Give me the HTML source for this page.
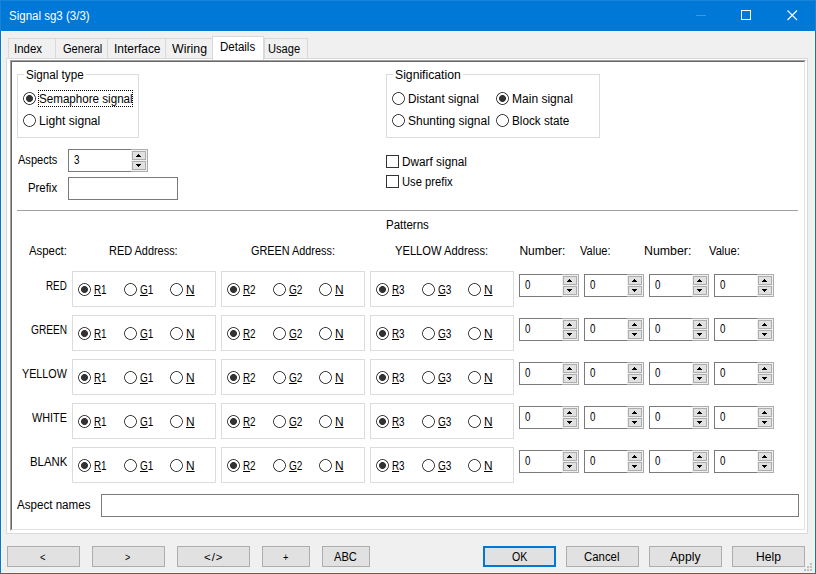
<!DOCTYPE html><html><head><meta charset="utf-8"><title>Signal sg3</title><style>

html,body{margin:0;padding:0;}
body{width:816px;height:574px;position:relative;overflow:hidden;background:#f0f0f0;font-family:"Liberation Sans",sans-serif;font-size:12px;color:#000;}
.a{position:absolute;box-sizing:border-box;}
.t{position:absolute;white-space:nowrap;line-height:16px;height:16px;transform-origin:0 50%;}
.gb{position:absolute;box-sizing:border-box;border:1px solid #dcdcdc;}
.rb{position:absolute;box-sizing:border-box;width:13px;height:13px;border-radius:50%;background:radial-gradient(circle at 50% 50%,#fff 0,#fff 5.15px,#333 5.75px,#333 6.3px,rgba(51,51,51,0) 6.8px);}
.rb.on{background:radial-gradient(circle at 50% 50%,#333 0,#333 3.1px,#fff 3.8px,#fff 5.15px,#333 5.75px,#333 6.3px,rgba(51,51,51,0) 6.8px);}
.cb{position:absolute;box-sizing:border-box;width:13px;height:13px;border:1px solid #333;background:#fff;}
.in{position:absolute;box-sizing:border-box;border:1px solid #7a7a7a;background:#fff;}
.btn{position:absolute;box-sizing:border-box;border:1px solid #adadad;background:#e1e1e1;}
.sp{position:absolute;box-sizing:border-box;border:1px solid #7a7a7a;background:#fff;height:23px;}
.sp .sb{position:absolute;right:-1px;top:-1px;bottom:-1px;width:17px;box-sizing:border-box;border:1px solid #adadad;border-left:none;background:#f0f0f0;}
.sp .u,.sp .d{position:absolute;left:1px;width:14px;height:9px;box-sizing:border-box;border:1px solid #adadad;background:#e1e1e1;}
.sp .u{top:1px;} .sp .d{top:11px;}
.sp svg{position:absolute;left:-1px;top:-1px;}
.tab{position:absolute;box-sizing:border-box;border:1px solid #d9d9d9;border-bottom:none;background:#f0f0f0;top:38px;height:20px;}
u{text-decoration:underline;text-underline-offset:1px;}

</style></head><body>
<div class="a" style="left:0;top:0;width:816px;height:574px;border:1px solid #0078d7;"></div>
<div class="a" style="left:0;top:0;width:816px;height:31px;background:#0078d7;border:1px solid #1883d9;border-bottom:none;"></div>
<div class="a" style="left:1px;top:31px;width:814px;height:542px;border:1px solid #fcf5ec;"></div>
<svg class="a" style="left:690px;top:0" width="126" height="31" viewBox="0 0 126 31"><path d="M6 15.5H16" stroke="#3c97e1" stroke-width="1" fill="none"/><rect x="51.5" y="10.5" width="9" height="9" stroke="#fff" stroke-width="1" fill="none"/><path d="M97.5 10.5L107 20M107 10.5L97.5 20" stroke="#fff" stroke-width="1.1" fill="none"/></svg>
<div class="a" style="left:6px;top:58px;width:802px;height:476px;border:1px solid #d9d9d9;background:#fff;"></div>
<div class="tab" style="left:8px;width:48px;"></div>
<div class="tab" style="left:55px;width:53px;"></div>
<div class="tab" style="left:107px;width:59px;"></div>
<div class="tab" style="left:165px;width:48px;"></div>
<div class="tab" style="left:264px;width:44px;"></div>
<div class="tab" style="left:212px;width:52px;top:36px;height:24px;background:#fff;"></div>
<div class="a" style="left:10px;top:60px;width:796px;height:471px;border-style:solid;border-width:1px;border-color:#a0a0a0 #fff #fff #a0a0a0;background:#fff;"></div>
<div class="a" style="left:11px;top:61px;width:794px;height:469px;border-style:solid;border-width:1px;border-color:#696969 #e3e3e3 #e3e3e3 #696969;background:#fff;"></div>
<div class="gb" style="left:17px;top:74px;width:122px;height:64px;"></div>
<div class="a" style="left:24px;top:70px;width:62px;height:10px;background:#fff;"></div>
<div class="gb" style="left:386px;top:74px;width:214px;height:64px;"></div>
<div class="a" style="left:393px;top:70px;width:70px;height:10px;background:#fff;"></div>
<div class="rb on" style="left:23px;top:92px;"></div>
<div class="rb" style="left:23px;top:114px;"></div>
<div class="rb" style="left:392px;top:92px;"></div>
<div class="rb on" style="left:496px;top:92px;"></div>
<div class="rb" style="left:392px;top:114px;"></div>
<div class="rb" style="left:496px;top:114px;"></div>
<div class="a" style="left:38px;top:90px;width:95px;height:17px;border:1px dotted #000;"></div>
<div class="sp" style="left:68px;top:149px;width:80px;"><div class="sb"><div class="u"><svg width="14" height="9" shape-rendering="crispEdges"><rect x="6" y="3" width="1" height="1"/><rect x="5" y="4" width="3" height="1"/><rect x="4" y="5" width="5" height="1"/></svg></div><div class="d"><svg width="14" height="9" shape-rendering="crispEdges"><rect x="4" y="3" width="5" height="1"/><rect x="5" y="4" width="3" height="1"/><rect x="6" y="5" width="1" height="1"/></svg></div></div></div>
<div class="in" style="left:68px;top:177px;width:110px;height:23px;"></div>
<div class="cb" style="left:386px;top:155px;"></div>
<div class="cb" style="left:386px;top:175px;"></div>
<div class="a" style="left:17px;top:210px;width:781px;height:1px;background:#a0a0a0;"></div>
<div class="gb" style="left:72px;top:271px;width:144px;height:36px;"></div>
<div class="rb on" style="left:78px;top:283px;"></div>
<div class="rb" style="left:124px;top:283px;"></div>
<div class="rb" style="left:170px;top:283px;"></div>
<div class="gb" style="left:221px;top:271px;width:144px;height:36px;"></div>
<div class="rb on" style="left:227px;top:283px;"></div>
<div class="rb" style="left:273px;top:283px;"></div>
<div class="rb" style="left:319px;top:283px;"></div>
<div class="gb" style="left:370px;top:271px;width:144px;height:36px;"></div>
<div class="rb on" style="left:376px;top:283px;"></div>
<div class="rb" style="left:422px;top:283px;"></div>
<div class="rb" style="left:468px;top:283px;"></div>
<div class="sp" style="left:519px;top:274px;width:60px;"><div class="sb"><div class="u"><svg width="14" height="9" shape-rendering="crispEdges"><rect x="6" y="3" width="1" height="1"/><rect x="5" y="4" width="3" height="1"/><rect x="4" y="5" width="5" height="1"/></svg></div><div class="d"><svg width="14" height="9" shape-rendering="crispEdges"><rect x="4" y="3" width="5" height="1"/><rect x="5" y="4" width="3" height="1"/><rect x="6" y="5" width="1" height="1"/></svg></div></div></div>
<div class="sp" style="left:584px;top:274px;width:60px;"><div class="sb"><div class="u"><svg width="14" height="9" shape-rendering="crispEdges"><rect x="6" y="3" width="1" height="1"/><rect x="5" y="4" width="3" height="1"/><rect x="4" y="5" width="5" height="1"/></svg></div><div class="d"><svg width="14" height="9" shape-rendering="crispEdges"><rect x="4" y="3" width="5" height="1"/><rect x="5" y="4" width="3" height="1"/><rect x="6" y="5" width="1" height="1"/></svg></div></div></div>
<div class="sp" style="left:649px;top:274px;width:60px;"><div class="sb"><div class="u"><svg width="14" height="9" shape-rendering="crispEdges"><rect x="6" y="3" width="1" height="1"/><rect x="5" y="4" width="3" height="1"/><rect x="4" y="5" width="5" height="1"/></svg></div><div class="d"><svg width="14" height="9" shape-rendering="crispEdges"><rect x="4" y="3" width="5" height="1"/><rect x="5" y="4" width="3" height="1"/><rect x="6" y="5" width="1" height="1"/></svg></div></div></div>
<div class="sp" style="left:714px;top:274px;width:60px;"><div class="sb"><div class="u"><svg width="14" height="9" shape-rendering="crispEdges"><rect x="6" y="3" width="1" height="1"/><rect x="5" y="4" width="3" height="1"/><rect x="4" y="5" width="5" height="1"/></svg></div><div class="d"><svg width="14" height="9" shape-rendering="crispEdges"><rect x="4" y="3" width="5" height="1"/><rect x="5" y="4" width="3" height="1"/><rect x="6" y="5" width="1" height="1"/></svg></div></div></div>
<div class="gb" style="left:72px;top:315px;width:144px;height:36px;"></div>
<div class="rb on" style="left:78px;top:327px;"></div>
<div class="rb" style="left:124px;top:327px;"></div>
<div class="rb" style="left:170px;top:327px;"></div>
<div class="gb" style="left:221px;top:315px;width:144px;height:36px;"></div>
<div class="rb on" style="left:227px;top:327px;"></div>
<div class="rb" style="left:273px;top:327px;"></div>
<div class="rb" style="left:319px;top:327px;"></div>
<div class="gb" style="left:370px;top:315px;width:144px;height:36px;"></div>
<div class="rb on" style="left:376px;top:327px;"></div>
<div class="rb" style="left:422px;top:327px;"></div>
<div class="rb" style="left:468px;top:327px;"></div>
<div class="sp" style="left:519px;top:318px;width:60px;"><div class="sb"><div class="u"><svg width="14" height="9" shape-rendering="crispEdges"><rect x="6" y="3" width="1" height="1"/><rect x="5" y="4" width="3" height="1"/><rect x="4" y="5" width="5" height="1"/></svg></div><div class="d"><svg width="14" height="9" shape-rendering="crispEdges"><rect x="4" y="3" width="5" height="1"/><rect x="5" y="4" width="3" height="1"/><rect x="6" y="5" width="1" height="1"/></svg></div></div></div>
<div class="sp" style="left:584px;top:318px;width:60px;"><div class="sb"><div class="u"><svg width="14" height="9" shape-rendering="crispEdges"><rect x="6" y="3" width="1" height="1"/><rect x="5" y="4" width="3" height="1"/><rect x="4" y="5" width="5" height="1"/></svg></div><div class="d"><svg width="14" height="9" shape-rendering="crispEdges"><rect x="4" y="3" width="5" height="1"/><rect x="5" y="4" width="3" height="1"/><rect x="6" y="5" width="1" height="1"/></svg></div></div></div>
<div class="sp" style="left:649px;top:318px;width:60px;"><div class="sb"><div class="u"><svg width="14" height="9" shape-rendering="crispEdges"><rect x="6" y="3" width="1" height="1"/><rect x="5" y="4" width="3" height="1"/><rect x="4" y="5" width="5" height="1"/></svg></div><div class="d"><svg width="14" height="9" shape-rendering="crispEdges"><rect x="4" y="3" width="5" height="1"/><rect x="5" y="4" width="3" height="1"/><rect x="6" y="5" width="1" height="1"/></svg></div></div></div>
<div class="sp" style="left:714px;top:318px;width:60px;"><div class="sb"><div class="u"><svg width="14" height="9" shape-rendering="crispEdges"><rect x="6" y="3" width="1" height="1"/><rect x="5" y="4" width="3" height="1"/><rect x="4" y="5" width="5" height="1"/></svg></div><div class="d"><svg width="14" height="9" shape-rendering="crispEdges"><rect x="4" y="3" width="5" height="1"/><rect x="5" y="4" width="3" height="1"/><rect x="6" y="5" width="1" height="1"/></svg></div></div></div>
<div class="gb" style="left:72px;top:359px;width:144px;height:36px;"></div>
<div class="rb on" style="left:78px;top:371px;"></div>
<div class="rb" style="left:124px;top:371px;"></div>
<div class="rb" style="left:170px;top:371px;"></div>
<div class="gb" style="left:221px;top:359px;width:144px;height:36px;"></div>
<div class="rb on" style="left:227px;top:371px;"></div>
<div class="rb" style="left:273px;top:371px;"></div>
<div class="rb" style="left:319px;top:371px;"></div>
<div class="gb" style="left:370px;top:359px;width:144px;height:36px;"></div>
<div class="rb on" style="left:376px;top:371px;"></div>
<div class="rb" style="left:422px;top:371px;"></div>
<div class="rb" style="left:468px;top:371px;"></div>
<div class="sp" style="left:519px;top:362px;width:60px;"><div class="sb"><div class="u"><svg width="14" height="9" shape-rendering="crispEdges"><rect x="6" y="3" width="1" height="1"/><rect x="5" y="4" width="3" height="1"/><rect x="4" y="5" width="5" height="1"/></svg></div><div class="d"><svg width="14" height="9" shape-rendering="crispEdges"><rect x="4" y="3" width="5" height="1"/><rect x="5" y="4" width="3" height="1"/><rect x="6" y="5" width="1" height="1"/></svg></div></div></div>
<div class="sp" style="left:584px;top:362px;width:60px;"><div class="sb"><div class="u"><svg width="14" height="9" shape-rendering="crispEdges"><rect x="6" y="3" width="1" height="1"/><rect x="5" y="4" width="3" height="1"/><rect x="4" y="5" width="5" height="1"/></svg></div><div class="d"><svg width="14" height="9" shape-rendering="crispEdges"><rect x="4" y="3" width="5" height="1"/><rect x="5" y="4" width="3" height="1"/><rect x="6" y="5" width="1" height="1"/></svg></div></div></div>
<div class="sp" style="left:649px;top:362px;width:60px;"><div class="sb"><div class="u"><svg width="14" height="9" shape-rendering="crispEdges"><rect x="6" y="3" width="1" height="1"/><rect x="5" y="4" width="3" height="1"/><rect x="4" y="5" width="5" height="1"/></svg></div><div class="d"><svg width="14" height="9" shape-rendering="crispEdges"><rect x="4" y="3" width="5" height="1"/><rect x="5" y="4" width="3" height="1"/><rect x="6" y="5" width="1" height="1"/></svg></div></div></div>
<div class="sp" style="left:714px;top:362px;width:60px;"><div class="sb"><div class="u"><svg width="14" height="9" shape-rendering="crispEdges"><rect x="6" y="3" width="1" height="1"/><rect x="5" y="4" width="3" height="1"/><rect x="4" y="5" width="5" height="1"/></svg></div><div class="d"><svg width="14" height="9" shape-rendering="crispEdges"><rect x="4" y="3" width="5" height="1"/><rect x="5" y="4" width="3" height="1"/><rect x="6" y="5" width="1" height="1"/></svg></div></div></div>
<div class="gb" style="left:72px;top:403px;width:144px;height:36px;"></div>
<div class="rb on" style="left:78px;top:415px;"></div>
<div class="rb" style="left:124px;top:415px;"></div>
<div class="rb" style="left:170px;top:415px;"></div>
<div class="gb" style="left:221px;top:403px;width:144px;height:36px;"></div>
<div class="rb on" style="left:227px;top:415px;"></div>
<div class="rb" style="left:273px;top:415px;"></div>
<div class="rb" style="left:319px;top:415px;"></div>
<div class="gb" style="left:370px;top:403px;width:144px;height:36px;"></div>
<div class="rb on" style="left:376px;top:415px;"></div>
<div class="rb" style="left:422px;top:415px;"></div>
<div class="rb" style="left:468px;top:415px;"></div>
<div class="sp" style="left:519px;top:406px;width:60px;"><div class="sb"><div class="u"><svg width="14" height="9" shape-rendering="crispEdges"><rect x="6" y="3" width="1" height="1"/><rect x="5" y="4" width="3" height="1"/><rect x="4" y="5" width="5" height="1"/></svg></div><div class="d"><svg width="14" height="9" shape-rendering="crispEdges"><rect x="4" y="3" width="5" height="1"/><rect x="5" y="4" width="3" height="1"/><rect x="6" y="5" width="1" height="1"/></svg></div></div></div>
<div class="sp" style="left:584px;top:406px;width:60px;"><div class="sb"><div class="u"><svg width="14" height="9" shape-rendering="crispEdges"><rect x="6" y="3" width="1" height="1"/><rect x="5" y="4" width="3" height="1"/><rect x="4" y="5" width="5" height="1"/></svg></div><div class="d"><svg width="14" height="9" shape-rendering="crispEdges"><rect x="4" y="3" width="5" height="1"/><rect x="5" y="4" width="3" height="1"/><rect x="6" y="5" width="1" height="1"/></svg></div></div></div>
<div class="sp" style="left:649px;top:406px;width:60px;"><div class="sb"><div class="u"><svg width="14" height="9" shape-rendering="crispEdges"><rect x="6" y="3" width="1" height="1"/><rect x="5" y="4" width="3" height="1"/><rect x="4" y="5" width="5" height="1"/></svg></div><div class="d"><svg width="14" height="9" shape-rendering="crispEdges"><rect x="4" y="3" width="5" height="1"/><rect x="5" y="4" width="3" height="1"/><rect x="6" y="5" width="1" height="1"/></svg></div></div></div>
<div class="sp" style="left:714px;top:406px;width:60px;"><div class="sb"><div class="u"><svg width="14" height="9" shape-rendering="crispEdges"><rect x="6" y="3" width="1" height="1"/><rect x="5" y="4" width="3" height="1"/><rect x="4" y="5" width="5" height="1"/></svg></div><div class="d"><svg width="14" height="9" shape-rendering="crispEdges"><rect x="4" y="3" width="5" height="1"/><rect x="5" y="4" width="3" height="1"/><rect x="6" y="5" width="1" height="1"/></svg></div></div></div>
<div class="gb" style="left:72px;top:447px;width:144px;height:36px;"></div>
<div class="rb on" style="left:78px;top:459px;"></div>
<div class="rb" style="left:124px;top:459px;"></div>
<div class="rb" style="left:170px;top:459px;"></div>
<div class="gb" style="left:221px;top:447px;width:144px;height:36px;"></div>
<div class="rb on" style="left:227px;top:459px;"></div>
<div class="rb" style="left:273px;top:459px;"></div>
<div class="rb" style="left:319px;top:459px;"></div>
<div class="gb" style="left:370px;top:447px;width:144px;height:36px;"></div>
<div class="rb on" style="left:376px;top:459px;"></div>
<div class="rb" style="left:422px;top:459px;"></div>
<div class="rb" style="left:468px;top:459px;"></div>
<div class="sp" style="left:519px;top:450px;width:60px;"><div class="sb"><div class="u"><svg width="14" height="9" shape-rendering="crispEdges"><rect x="6" y="3" width="1" height="1"/><rect x="5" y="4" width="3" height="1"/><rect x="4" y="5" width="5" height="1"/></svg></div><div class="d"><svg width="14" height="9" shape-rendering="crispEdges"><rect x="4" y="3" width="5" height="1"/><rect x="5" y="4" width="3" height="1"/><rect x="6" y="5" width="1" height="1"/></svg></div></div></div>
<div class="sp" style="left:584px;top:450px;width:60px;"><div class="sb"><div class="u"><svg width="14" height="9" shape-rendering="crispEdges"><rect x="6" y="3" width="1" height="1"/><rect x="5" y="4" width="3" height="1"/><rect x="4" y="5" width="5" height="1"/></svg></div><div class="d"><svg width="14" height="9" shape-rendering="crispEdges"><rect x="4" y="3" width="5" height="1"/><rect x="5" y="4" width="3" height="1"/><rect x="6" y="5" width="1" height="1"/></svg></div></div></div>
<div class="sp" style="left:649px;top:450px;width:60px;"><div class="sb"><div class="u"><svg width="14" height="9" shape-rendering="crispEdges"><rect x="6" y="3" width="1" height="1"/><rect x="5" y="4" width="3" height="1"/><rect x="4" y="5" width="5" height="1"/></svg></div><div class="d"><svg width="14" height="9" shape-rendering="crispEdges"><rect x="4" y="3" width="5" height="1"/><rect x="5" y="4" width="3" height="1"/><rect x="6" y="5" width="1" height="1"/></svg></div></div></div>
<div class="sp" style="left:714px;top:450px;width:60px;"><div class="sb"><div class="u"><svg width="14" height="9" shape-rendering="crispEdges"><rect x="6" y="3" width="1" height="1"/><rect x="5" y="4" width="3" height="1"/><rect x="4" y="5" width="5" height="1"/></svg></div><div class="d"><svg width="14" height="9" shape-rendering="crispEdges"><rect x="4" y="3" width="5" height="1"/><rect x="5" y="4" width="3" height="1"/><rect x="6" y="5" width="1" height="1"/></svg></div></div></div>
<div class="in" style="left:101px;top:494px;width:698px;height:23px;"></div>
<div class="btn" style="left:7px;top:546px;width:73px;height:21px;"></div>
<div class="btn" style="left:92px;top:546px;width:73px;height:21px;"></div>
<div class="btn" style="left:177px;top:546px;width:73px;height:21px;"></div>
<div class="btn" style="left:262px;top:546px;width:48px;height:21px;"></div>
<div class="btn" style="left:322px;top:546px;width:48px;height:21px;"></div>
<div class="btn" style="left:566px;top:546px;width:73px;height:21px;"></div>
<div class="btn" style="left:649px;top:546px;width:73px;height:21px;"></div>
<div class="btn" style="left:732px;top:546px;width:73px;height:21px;"></div>
<div class="btn" style="left:483px;top:546px;width:73px;height:21px;border:2px solid #0078d7;"></div>
<svg class="a" style="left:803px;top:562px" width="10" height="10"><g fill="#bfbfbf"><rect x="7" y="1" width="2" height="2"/><rect x="4" y="4" width="2" height="2"/><rect x="7" y="4" width="2" height="2"/><rect x="1" y="7" width="2" height="2"/><rect x="4" y="7" width="2" height="2"/><rect x="7" y="7" width="2" height="2"/></g></svg>
<span class="t" id="t0" style="left:9.1px;top:8px;color:#fff;font-size:12px;transform:scaleX(0.9594);">Signal sg3 (3/3)</span>
<span class="t" id="t1" style="left:13.9px;top:41px;color:#000;font-size:12px;transform:scaleX(0.9526);">Index</span>
<span class="t" id="t2" style="left:63.2px;top:41px;color:#000;font-size:12px;transform:scaleX(0.9210);">General</span>
<span class="t" id="t3" style="left:113.8px;top:41px;color:#000;font-size:12px;transform:scaleX(0.9962);">Interface</span>
<span class="t" id="t4" style="left:171.7px;top:41px;color:#000;font-size:12px;transform:scaleX(1.0297);">Wiring</span>
<span class="t" id="t5" style="left:219.8px;top:39px;color:#000;font-size:12px;transform:scaleX(0.9578);">Details</span>
<span class="t" id="t6" style="left:268.1px;top:41px;color:#000;font-size:12px;transform:scaleX(0.9280);">Usage</span>
<span class="t" id="t7" style="left:26.0px;top:67px;color:#000;font-size:12px;transform:scaleX(0.9704);">Signal type</span>
<span class="t" id="t8" style="left:39.0px;top:91px;color:#000;font-size:12px;transform:scaleX(0.9683);">Semaphore signal</span>
<span class="t" id="t9" style="left:38.7px;top:113px;color:#000;font-size:12px;transform:scaleX(1.0098);">Light signal</span>
<span class="t" id="t10" style="left:394.9px;top:67px;color:#000;font-size:12px;transform:scaleX(1.0164);">Signification</span>
<span class="t" id="t11" style="left:407.9px;top:91px;color:#000;font-size:12px;transform:scaleX(0.9825);">Distant signal</span>
<span class="t" id="t12" style="left:512.2px;top:91px;color:#000;font-size:12px;transform:scaleX(1.0022);">Main signal</span>
<span class="t" id="t13" style="left:408.3px;top:113px;color:#000;font-size:12px;transform:scaleX(0.9971);">Shunting signal</span>
<span class="t" id="t14" style="left:512.2px;top:113px;color:#000;font-size:12px;transform:scaleX(0.9755);">Block state</span>
<span class="t" id="t15" style="left:18.1px;top:152px;color:#000;font-size:12px;transform:scaleX(0.9201);">Aspects</span>
<span class="t" id="t16" style="left:28.1px;top:180px;color:#000;font-size:12px;transform:scaleX(0.9474);">Prefix</span>
<span class="t" id="t17" style="left:401.6px;top:154px;color:#000;font-size:12px;transform:scaleX(0.9838);">Dwarf signal</span>
<span class="t" id="t18" style="left:401.7px;top:174px;color:#000;font-size:12px;transform:scaleX(0.9358);">Use prefix</span>
<span class="t" id="t19" style="left:385.8px;top:217px;color:#000;font-size:12px;transform:scaleX(0.9586);">Patterns</span>
<span class="t" id="t20" style="left:28.9px;top:243px;color:#000;font-size:12px;transform:scaleX(0.9482);">Aspect:</span>
<span class="t" id="t21" style="left:109.4px;top:243px;color:#000;font-size:12px;transform:scaleX(0.9109);">RED Address:</span>
<span class="t" id="t22" style="left:251.3px;top:243px;color:#000;font-size:12px;transform:scaleX(0.9050);">GREEN Address:</span>
<span class="t" id="t23" style="left:395.4px;top:243px;color:#000;font-size:12px;transform:scaleX(0.9311);">YELLOW Address:</span>
<span class="t" id="t24" style="left:519.4px;top:243px;color:#000;font-size:12px;transform:scaleX(1.0000);">Number:</span>
<span class="t" id="t25" style="left:579.8px;top:243px;color:#000;font-size:12px;transform:scaleX(0.9213);">Value:</span>
<span class="t" id="t26" style="left:643.8px;top:243px;color:#000;font-size:12px;transform:scaleX(1.0287);">Number:</span>
<span class="t" id="t27" style="left:709.3px;top:243px;color:#000;font-size:12px;transform:scaleX(0.9328);">Value:</span>
<span class="t" id="t28" style="left:74.3px;top:152px;color:#000;font-size:12px;transform:scaleX(0.8256);">3</span>
<span class="t" id="t29" style="left:17.2px;top:497px;color:#000;font-size:12px;transform:scaleX(0.9662);">Aspect names</span>
<span class="t" id="t30" style="left:45.9px;top:278px;color:#000;font-size:12px;transform:scaleX(0.8179);">RED</span>
<span class="t" id="t31" style="left:94.1px;top:282px;color:#000;font-size:12px;transform:scaleX(0.8186);"><u>R</u>1</span>
<span class="t" id="t32" style="left:140.4px;top:282px;color:#000;font-size:12px;transform:scaleX(0.8338);"><u>G</u>1</span>
<span class="t" id="t33" style="left:186.0px;top:282px;color:#000;font-size:12px;transform:scaleX(0.9892);"><u>N</u></span>
<span class="t" id="t34" style="left:243.1px;top:282px;color:#000;font-size:12px;transform:scaleX(0.8214);"><u>R</u>2</span>
<span class="t" id="t35" style="left:289.4px;top:282px;color:#000;font-size:12px;transform:scaleX(0.8354);"><u>G</u>2</span>
<span class="t" id="t36" style="left:335.0px;top:282px;color:#000;font-size:12px;transform:scaleX(0.9892);"><u>N</u></span>
<span class="t" id="t37" style="left:392.1px;top:282px;color:#000;font-size:12px;transform:scaleX(0.8207);"><u>R</u>3</span>
<span class="t" id="t38" style="left:438.0px;top:282px;color:#000;font-size:12px;transform:scaleX(0.8348);"><u>G</u>3</span>
<span class="t" id="t39" style="left:484.0px;top:282px;color:#000;font-size:12px;transform:scaleX(0.9892);"><u>N</u></span>
<span class="t" id="t40" style="left:525.4px;top:277px;color:#000;font-size:12px;transform:scaleX(0.8122);">0</span>
<span class="t" id="t41" style="left:590.4px;top:277px;color:#000;font-size:12px;transform:scaleX(0.8122);">0</span>
<span class="t" id="t42" style="left:655.4px;top:277px;color:#000;font-size:12px;transform:scaleX(0.8122);">0</span>
<span class="t" id="t43" style="left:720.4px;top:277px;color:#000;font-size:12px;transform:scaleX(0.8122);">0</span>
<span class="t" id="t44" style="left:31.3px;top:322px;color:#000;font-size:12px;transform:scaleX(0.8437);">GREEN</span>
<span class="t" id="t45" style="left:94.1px;top:326px;color:#000;font-size:12px;transform:scaleX(0.8186);"><u>R</u>1</span>
<span class="t" id="t46" style="left:140.4px;top:326px;color:#000;font-size:12px;transform:scaleX(0.8338);"><u>G</u>1</span>
<span class="t" id="t47" style="left:186.0px;top:326px;color:#000;font-size:12px;transform:scaleX(0.9892);"><u>N</u></span>
<span class="t" id="t48" style="left:243.1px;top:326px;color:#000;font-size:12px;transform:scaleX(0.8214);"><u>R</u>2</span>
<span class="t" id="t49" style="left:289.4px;top:326px;color:#000;font-size:12px;transform:scaleX(0.8354);"><u>G</u>2</span>
<span class="t" id="t50" style="left:335.0px;top:326px;color:#000;font-size:12px;transform:scaleX(0.9892);"><u>N</u></span>
<span class="t" id="t51" style="left:392.1px;top:326px;color:#000;font-size:12px;transform:scaleX(0.8207);"><u>R</u>3</span>
<span class="t" id="t52" style="left:438.0px;top:326px;color:#000;font-size:12px;transform:scaleX(0.8348);"><u>G</u>3</span>
<span class="t" id="t53" style="left:484.0px;top:326px;color:#000;font-size:12px;transform:scaleX(0.9892);"><u>N</u></span>
<span class="t" id="t54" style="left:525.4px;top:321px;color:#000;font-size:12px;transform:scaleX(0.8122);">0</span>
<span class="t" id="t55" style="left:590.4px;top:321px;color:#000;font-size:12px;transform:scaleX(0.8122);">0</span>
<span class="t" id="t56" style="left:655.4px;top:321px;color:#000;font-size:12px;transform:scaleX(0.8122);">0</span>
<span class="t" id="t57" style="left:720.4px;top:321px;color:#000;font-size:12px;transform:scaleX(0.8122);">0</span>
<span class="t" id="t58" style="left:22.2px;top:366px;color:#000;font-size:12px;transform:scaleX(0.8954);">YELLOW</span>
<span class="t" id="t59" style="left:94.1px;top:370px;color:#000;font-size:12px;transform:scaleX(0.8186);"><u>R</u>1</span>
<span class="t" id="t60" style="left:140.4px;top:370px;color:#000;font-size:12px;transform:scaleX(0.8338);"><u>G</u>1</span>
<span class="t" id="t61" style="left:186.0px;top:370px;color:#000;font-size:12px;transform:scaleX(0.9892);"><u>N</u></span>
<span class="t" id="t62" style="left:243.1px;top:370px;color:#000;font-size:12px;transform:scaleX(0.8214);"><u>R</u>2</span>
<span class="t" id="t63" style="left:289.4px;top:370px;color:#000;font-size:12px;transform:scaleX(0.8354);"><u>G</u>2</span>
<span class="t" id="t64" style="left:335.0px;top:370px;color:#000;font-size:12px;transform:scaleX(0.9892);"><u>N</u></span>
<span class="t" id="t65" style="left:392.1px;top:370px;color:#000;font-size:12px;transform:scaleX(0.8207);"><u>R</u>3</span>
<span class="t" id="t66" style="left:438.0px;top:370px;color:#000;font-size:12px;transform:scaleX(0.8348);"><u>G</u>3</span>
<span class="t" id="t67" style="left:484.0px;top:370px;color:#000;font-size:12px;transform:scaleX(0.9892);"><u>N</u></span>
<span class="t" id="t68" style="left:525.4px;top:365px;color:#000;font-size:12px;transform:scaleX(0.8122);">0</span>
<span class="t" id="t69" style="left:590.4px;top:365px;color:#000;font-size:12px;transform:scaleX(0.8122);">0</span>
<span class="t" id="t70" style="left:655.4px;top:365px;color:#000;font-size:12px;transform:scaleX(0.8122);">0</span>
<span class="t" id="t71" style="left:720.4px;top:365px;color:#000;font-size:12px;transform:scaleX(0.8122);">0</span>
<span class="t" id="t72" style="left:31.8px;top:410px;color:#000;font-size:12px;transform:scaleX(0.9019);">WHITE</span>
<span class="t" id="t73" style="left:94.1px;top:414px;color:#000;font-size:12px;transform:scaleX(0.8186);"><u>R</u>1</span>
<span class="t" id="t74" style="left:140.4px;top:414px;color:#000;font-size:12px;transform:scaleX(0.8338);"><u>G</u>1</span>
<span class="t" id="t75" style="left:186.0px;top:414px;color:#000;font-size:12px;transform:scaleX(0.9892);"><u>N</u></span>
<span class="t" id="t76" style="left:243.1px;top:414px;color:#000;font-size:12px;transform:scaleX(0.8214);"><u>R</u>2</span>
<span class="t" id="t77" style="left:289.4px;top:414px;color:#000;font-size:12px;transform:scaleX(0.8354);"><u>G</u>2</span>
<span class="t" id="t78" style="left:335.0px;top:414px;color:#000;font-size:12px;transform:scaleX(0.9892);"><u>N</u></span>
<span class="t" id="t79" style="left:392.1px;top:414px;color:#000;font-size:12px;transform:scaleX(0.8207);"><u>R</u>3</span>
<span class="t" id="t80" style="left:438.0px;top:414px;color:#000;font-size:12px;transform:scaleX(0.8348);"><u>G</u>3</span>
<span class="t" id="t81" style="left:484.0px;top:414px;color:#000;font-size:12px;transform:scaleX(0.9892);"><u>N</u></span>
<span class="t" id="t82" style="left:525.4px;top:409px;color:#000;font-size:12px;transform:scaleX(0.8122);">0</span>
<span class="t" id="t83" style="left:590.4px;top:409px;color:#000;font-size:12px;transform:scaleX(0.8122);">0</span>
<span class="t" id="t84" style="left:655.4px;top:409px;color:#000;font-size:12px;transform:scaleX(0.8122);">0</span>
<span class="t" id="t85" style="left:720.4px;top:409px;color:#000;font-size:12px;transform:scaleX(0.8122);">0</span>
<span class="t" id="t86" style="left:29.6px;top:454px;color:#000;font-size:12px;transform:scaleX(0.9487);">BLANK</span>
<span class="t" id="t87" style="left:94.1px;top:458px;color:#000;font-size:12px;transform:scaleX(0.8186);"><u>R</u>1</span>
<span class="t" id="t88" style="left:140.4px;top:458px;color:#000;font-size:12px;transform:scaleX(0.8338);"><u>G</u>1</span>
<span class="t" id="t89" style="left:186.0px;top:458px;color:#000;font-size:12px;transform:scaleX(0.9892);"><u>N</u></span>
<span class="t" id="t90" style="left:243.1px;top:458px;color:#000;font-size:12px;transform:scaleX(0.8214);"><u>R</u>2</span>
<span class="t" id="t91" style="left:289.4px;top:458px;color:#000;font-size:12px;transform:scaleX(0.8354);"><u>G</u>2</span>
<span class="t" id="t92" style="left:335.0px;top:458px;color:#000;font-size:12px;transform:scaleX(0.9892);"><u>N</u></span>
<span class="t" id="t93" style="left:392.1px;top:458px;color:#000;font-size:12px;transform:scaleX(0.8207);"><u>R</u>3</span>
<span class="t" id="t94" style="left:438.0px;top:458px;color:#000;font-size:12px;transform:scaleX(0.8348);"><u>G</u>3</span>
<span class="t" id="t95" style="left:484.0px;top:458px;color:#000;font-size:12px;transform:scaleX(0.9892);"><u>N</u></span>
<span class="t" id="t96" style="left:525.4px;top:453px;color:#000;font-size:12px;transform:scaleX(0.8122);">0</span>
<span class="t" id="t97" style="left:590.4px;top:453px;color:#000;font-size:12px;transform:scaleX(0.8122);">0</span>
<span class="t" id="t98" style="left:655.4px;top:453px;color:#000;font-size:12px;transform:scaleX(0.8122);">0</span>
<span class="t" id="t99" style="left:720.4px;top:453px;color:#000;font-size:12px;transform:scaleX(0.8122);">0</span>
<span class="t" id="t100" style="left:40.4px;top:549px;color:#000;font-size:11px;transform:scaleX(0.8570);">&lt;</span>
<span class="t" id="t101" style="left:124.9px;top:549px;color:#000;font-size:11px;transform:scaleX(0.8248);">&gt;</span>
<span class="t" id="t102" style="left:204.4px;top:549px;color:#000;font-size:11px;transform:scaleX(1.0448);"><span style="letter-spacing:0.9px">&lt;/&gt;</span></span>
<span class="t" id="t103" style="left:282.9px;top:549px;color:#000;font-size:11px;transform:scaleX(0.8485);">+</span>
<span class="t" id="t104" style="left:334.0px;top:549px;color:#000;font-size:12px;transform:scaleX(0.9250);">ABC</span>
<span class="t" id="t105" style="left:512.0px;top:549px;color:#000;font-size:12px;transform:scaleX(0.8830);">OK</span>
<span class="t" id="t106" style="left:584.0px;top:549px;color:#000;font-size:12px;transform:scaleX(0.9487);">Cancel</span>
<span class="t" id="t107" style="left:670.3px;top:549px;color:#000;font-size:12px;transform:scaleX(1.0149);">Apply</span>
<span class="t" id="t108" style="left:756.0px;top:549px;color:#000;font-size:12px;transform:scaleX(1.0112);">Help</span>
</body></html>
